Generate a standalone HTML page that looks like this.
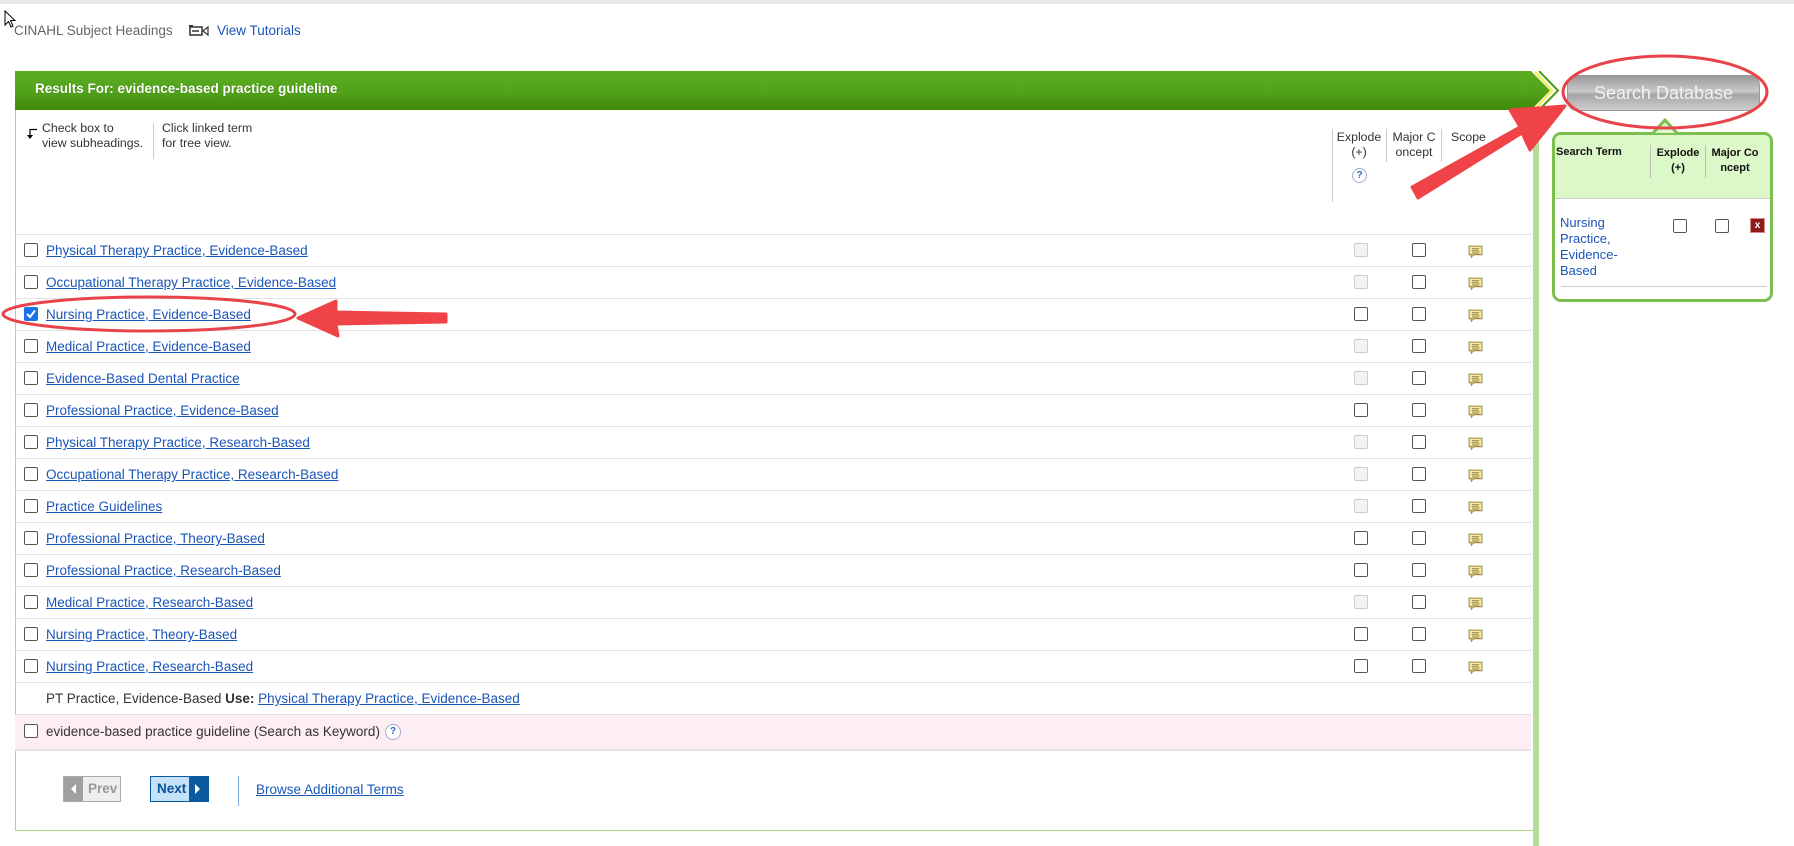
<!DOCTYPE html>
<html><head><meta charset="utf-8"><style>
*{margin:0;padding:0;box-sizing:border-box}
body{width:1794px;height:846px;background:#fff;font-family:"Liberation Sans",Arial,sans-serif;position:relative;overflow:hidden;color:#333}
.a{position:absolute}
a,.lnk{color:#1a55b8;text-decoration:underline}
.cb{position:absolute;width:14px;height:14px;border:1px solid #555;border-radius:2px;background:#fff}
.cb.d{border-color:#ccc;background:#f3f3f3}
.row{position:absolute;left:15px;width:1516px;height:32px;border-top:1px solid #e3e3e3;font-size:13.5px}
.row .t{position:absolute;left:31px;top:8px}
.sc{position:absolute;left:1453px;top:10px;width:15px;height:13px}
</style></head><body>
<div class="a" style="left:0;top:0;width:1794px;height:4px;background:#e8e8e8"></div>
<svg class="a" style="left:4px;top:10px" width="14" height="20"><path d="M1 1 L1 15 L4.5 11.5 L7 17 L9 16 L6.5 10.5 L11 10.5 Z" fill="#fff" stroke="#000" stroke-width="1"/></svg>
<div class="a" style="left:14px;top:23px;font-size:13.5px;color:#666">CINAHL Subject Headings</div>
<svg class="a" style="left:189px;top:25px" width="20" height="13"><rect x="1" y="2" width="12" height="8" fill="none" stroke="#333" stroke-width="1.5"/><path d="M3 6 H10" stroke="#333" stroke-width="1.5"/><path d="M14 6 L19 2 V10 Z" fill="none" stroke="#333" stroke-width="1.2"/><rect x="0" y="0" width="4" height="2" fill="#333"/></svg>
<div class="a" style="left:217px;top:23px;font-size:13.5px;color:#1a55b8">View Tutorials</div>

<!-- main panel -->
<div class="a" style="left:15px;top:110px;width:1519px;height:721px;border-left:1px solid #a8d98a;border-bottom:1px solid #a8d98a"></div>
<div class="a" style="left:1533px;top:110px;width:6px;height:736px;background:#b5dc9a"></div>
<svg class="a" style="left:15px;top:71px" width="1545" height="40">
<defs><linearGradient id="g" x1="0" y1="0" x2="0" y2="1"><stop offset="0" stop-color="#5aad20"/><stop offset="0.5" stop-color="#53a41c"/><stop offset="1" stop-color="#3e8a0a"/></linearGradient></defs>
<path d="M0 0 H1516 L1535 19.5 L1516 39 H0 Z" fill="url(#g)"/>
<path d="M1520 1 L1537 19.5 L1520 38" fill="none" stroke="#f4f060" stroke-width="2.5"/>
<path d="M1524 0 L1543 19.5 L1524 39" fill="none" stroke="#4f9b17" stroke-width="2"/>
</svg>
<div class="a" style="left:35px;top:81px;font-size:13.5px;font-weight:bold;color:#fff;text-shadow:0 0 1px #2a5a05">Results For: evidence-based practice guideline</div>

<svg class="a" style="left:25px;top:128px" width="14" height="12"><path d="M12 1.5 H5 V10" fill="none" stroke="#000" stroke-width="1.2"/><path d="M2 7 L5 11 L8 7 Z" fill="#000"/></svg>
<div class="a" style="left:42px;top:121px;font-size:12.3px;line-height:15px;color:#333">Check box to<br>view subheadings.</div>
<div class="a" style="left:153px;top:123px;width:1px;height:36px;background:#ccc"></div>
<div class="a" style="left:162px;top:121px;font-size:12.3px;line-height:15px;color:#333">Click linked term<br>for tree view.</div>

<div class="a" style="left:1332px;top:129px;width:1px;height:73px;background:#ccc"></div>
<div class="a" style="left:1333px;top:130px;width:52px;text-align:center;font-size:12.3px;line-height:15px">Explode<br>(+)</div>
<div class="a" style="left:1352px;top:168px;width:15px;height:15px;border-radius:50%;border:1px solid #aac;background:#fff;color:#2a6ad0;font-size:10px;font-weight:bold;text-align:center;line-height:13px">?</div>
<div class="a" style="left:1386px;top:129px;width:1px;height:33px;background:#ccc"></div>
<div class="a" style="left:1387px;top:130px;width:54px;text-align:center;font-size:12.3px;line-height:15px">Major C<br>oncept</div>
<div class="a" style="left:1441px;top:129px;width:1px;height:33px;background:#ccc"></div>
<div class="a" style="left:1451px;top:130px;font-size:12.3px">Scope</div>

<div id="rows"></div>
<script>
var r=[["Physical Therapy Practice, Evidence-Based",0],["Occupational Therapy Practice, Evidence-Based",0],["Nursing Practice, Evidence-Based",1],["Medical Practice, Evidence-Based",0],["Evidence-Based Dental Practice",0],["Professional Practice, Evidence-Based",1],["Physical Therapy Practice, Research-Based",0],["Occupational Therapy Practice, Research-Based",0],["Practice Guidelines",0],["Professional Practice, Theory-Based",1],["Professional Practice, Research-Based",1],["Medical Practice, Research-Based",0],["Nursing Practice, Theory-Based",1],["Nursing Practice, Research-Based",1]];
var h="";
r.forEach(function(x,i){var t=234+i*32;
h+='<div class="row" style="top:'+t+'px"><div class="cb" style="left:9px;top:8px;'+(i==2?'background:#1a73e8;border-color:#1a73e8':'')+'">'+(i==2?'<svg width="12" height="12" style="position:absolute;left:0;top:0"><path d="M2 6 L5 9 L10 2.5" fill="none" stroke="#fff" stroke-width="2"/></svg>':'')+'</div><span class="t lnk">'+x[0]+'</span><div class="cb'+(x[1]?'':' d')+'" style="left:1339px;top:8px"></div><div class="cb" style="left:1397px;top:8px"></div><svg class="sc" viewBox="0 0 14 12"><path d="M1 1 H13 V9 H5 L3 11.5 V9 H1 Z" fill="#fbe9a0" stroke="#9a8a50" stroke-width="1"/><path d="M3.5 3.5 H10.5 M3.5 5.5 H10.5 M3.5 7.5 H10.5" stroke="#7a6a30" stroke-width=".8"/></svg></div>';});
h+='<div class="row" style="top:682px"><span class="t">PT Practice, Evidence-Based <b>Use:</b> <span class="lnk">Physical Therapy Practice, Evidence-Based</span></span></div>';
h+='<div class="row" style="top:714px;height:37px;background:#fdeef4;border-bottom:2px solid #e8e0e4"><div class="cb" style="left:9px;top:9px"></div><span class="t" style="top:9px">evidence-based practice guideline (Search as Keyword)</span><div style="position:absolute;left:370px;top:9px;width:16px;height:16px;border-radius:50%;border:1px solid #aac;background:#fff;color:#2a6ad0;font-size:10px;font-weight:bold;text-align:center;line-height:14px">?</div></div>';
document.getElementById('rows').innerHTML=h;
</script>

<div class="a" style="left:63px;top:776px;width:58px;height:26px;border:1px solid #aaa;background:#eee"><div style="position:absolute;left:0;top:0;width:19px;height:24px;background:#a0a0a0"></div><svg style="position:absolute;left:6px;top:7px" width="8" height="10"><path d="M6 0 L1 5 L6 10Z" fill="#fff"/></svg><span style="position:absolute;left:24px;top:4px;font-size:13.5px;font-weight:bold;color:#999">Prev</span></div>
<div class="a" style="left:150px;top:776px;width:59px;height:26px;border:1px solid #0b5aa0;background:#c4e1fa"><div style="position:absolute;right:0;top:0;width:19px;height:24px;background:#0b5aa0"></div><svg style="position:absolute;right:6px;top:7px" width="8" height="10"><path d="M1 0 L6 5 L1 10Z" fill="#fff"/></svg><span style="position:absolute;left:6px;top:4px;font-size:13.5px;font-weight:bold;color:#0b4f96">Next</span></div>
<div class="a" style="left:238px;top:776px;width:1px;height:30px;background:#7aaedc"></div>
<div class="a lnk" style="left:256px;top:782px;font-size:13.5px">Browse Additional Terms</div>

<!-- right panel -->
<div class="a" style="left:1567px;top:75px;width:193px;height:36px;border-radius:10px;background:linear-gradient(#9a9a9a,#c9c9c9 45%,#a5a5a5 55%,#cfcfcf);border:1px solid #999;color:#f2f2f2;font-size:18px;text-align:center;line-height:34px">Search Database</div>
<div class="a" style="left:1552px;top:132px;width:221px;height:170px;border:3px solid #7cbf50;border-radius:9px;background:#fff;overflow:hidden">
 <div style="position:absolute;left:0;top:0;width:100%;height:64px;background:#dcf7c8;border-bottom:1px solid #ccc"></div>
 <div style="position:absolute;left:1px;top:11px;font-size:11px;font-weight:bold;color:#111">Search Term</div>
 <div style="position:absolute;left:95px;top:10px;width:1px;height:33px;background:#bbb"></div>
 <div style="position:absolute;left:98px;top:11px;width:50px;text-align:center;font-size:11px;font-weight:bold;line-height:15px;color:#111">Explode<br>(+)</div>
 <div style="position:absolute;left:150px;top:10px;width:1px;height:33px;background:#bbb"></div>
 <div style="position:absolute;left:152px;top:11px;width:56px;text-align:center;font-size:11px;font-weight:bold;line-height:15px;color:#111">Major Co<br>ncept</div>
 <div style="position:absolute;left:5px;top:80px;font-size:13px;line-height:16px;color:#1a55b8">Nursing<br>Practice,<br>Evidence-<br>Based</div>
 <div class="cb" style="left:118px;top:84px"></div>
 <div class="cb" style="left:160px;top:84px"></div>
 <div style="position:absolute;left:195px;top:83px;width:15px;height:15px;background:#8c1a1a;border:1px solid #d88;color:#fff;font-size:10px;font-weight:bold;text-align:center;line-height:13px">x</div>
 <div style="position:absolute;left:6px;top:151px;width:206px;height:1px;background:#ccc"></div>
</div>
<svg class="a" style="left:1652px;top:118px" width="26" height="16"><path d="M1 15 L13 2 L25 15" fill="#dcf7c8" stroke="#7cbf50" stroke-width="3"/></svg>

<!-- annotations -->
<svg class="a" style="left:0;top:0" width="1794" height="846">
<ellipse cx="1665" cy="92" rx="102" ry="36" fill="none" stroke="#e8434a" stroke-width="3"/>
<ellipse cx="149" cy="314" rx="146" ry="17" fill="none" stroke="#e8434a" stroke-width="3"/>
<g fill="#f04348">
<path d="M1412 187 L1520 127 L1510 110 L1565 106 L1530 150 L1522 133 L1418 198 Z" stroke="#f04348" stroke-width="3" stroke-linejoin="round"/>
<path d="M446 314 L446 322 L336 324 L338 336 L298 318 L336 301 L336 312 Z" stroke="#f04348" stroke-width="3" stroke-linejoin="round"/>
</g>
</svg>
</body></html>
